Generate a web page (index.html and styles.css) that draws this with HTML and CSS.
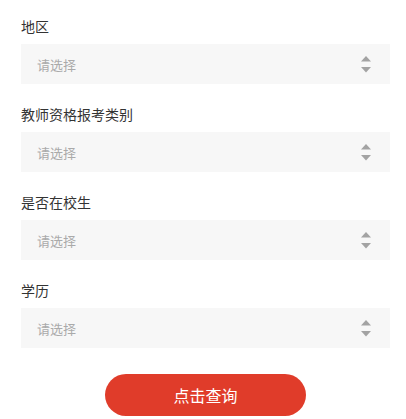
FILE: index.html
```html
<!DOCTYPE html>
<html lang="zh">
<head>
<meta charset="utf-8">
<link rel="stylesheet" href="styles.css">
</head>
<body>
<form class="form">
  <div class="field">
    <div class="label">地区</div>
    <div class="select"><span class="placeholder">请选择</span><svg class="arrows" width="10" height="17" viewBox="0 0 10 17"><path d="M5 0 L10 5.5 L0 5.5 Z"/><path d="M0 11 L10 11 L5 16.5 Z"/></svg></div>
  </div>
  <div class="field">
    <div class="label">教师资格报考类别</div>
    <div class="select"><span class="placeholder">请选择</span><svg class="arrows" width="10" height="17" viewBox="0 0 10 17"><path d="M5 0 L10 5.5 L0 5.5 Z"/><path d="M0 11 L10 11 L5 16.5 Z"/></svg></div>
  </div>
  <div class="field">
    <div class="label">是否在校生</div>
    <div class="select"><span class="placeholder">请选择</span><svg class="arrows" width="10" height="17" viewBox="0 0 10 17"><path d="M5 0 L10 5.5 L0 5.5 Z"/><path d="M0 11 L10 11 L5 16.5 Z"/></svg></div>
  </div>
  <div class="field">
    <div class="label">学历</div>
    <div class="select"><span class="placeholder">请选择</span><svg class="arrows" width="10" height="17" viewBox="0 0 10 17"><path d="M5 0 L10 5.5 L0 5.5 Z"/><path d="M0 11 L10 11 L5 16.5 Z"/></svg></div>
  </div>
  <div class="actions">
    <button type="button" class="btn">点击查询</button>
  </div>
</form>
</body>
</html>
```
FILE: styles.css
```css
html, body {
  margin: 0;
  padding: 0;
  background: #fff;
}
body {
  font-family: "Noto Sans CJK SC", "Noto Sans", sans-serif;
  color: #333;
}
.form {
  padding: 16px 16px 0 21px;
  display: flex;
  flex-direction: column;
  gap: 20px;
}
.field {
  display: flex;
  flex-direction: column;
  gap: 8px;
}
.label {
  font-size: 14px;
  line-height: 20px;
  color: #333;
}
.select {
  height: 40px;
  background: #f7f7f7;
  display: flex;
  align-items: center;
  justify-content: space-between;
  padding: 0 19px 0 16px;
}
.placeholder {
  font-size: 13px;
  color: #aaa;
}
.arrows {
  fill: #a3a3a3;
  display: block;
}
.actions {
  display: flex;
  justify-content: center;
  padding-top: 6px;
}
.btn {
  width: 201px;
  height: 42px;
  border: none;
  border-radius: 21px;
  background: #e03c2a;
  color: #fff;
  font-family: "Noto Sans CJK SC", "Noto Sans", sans-serif;
  font-size: 16px;
  padding: 0;
}
```
